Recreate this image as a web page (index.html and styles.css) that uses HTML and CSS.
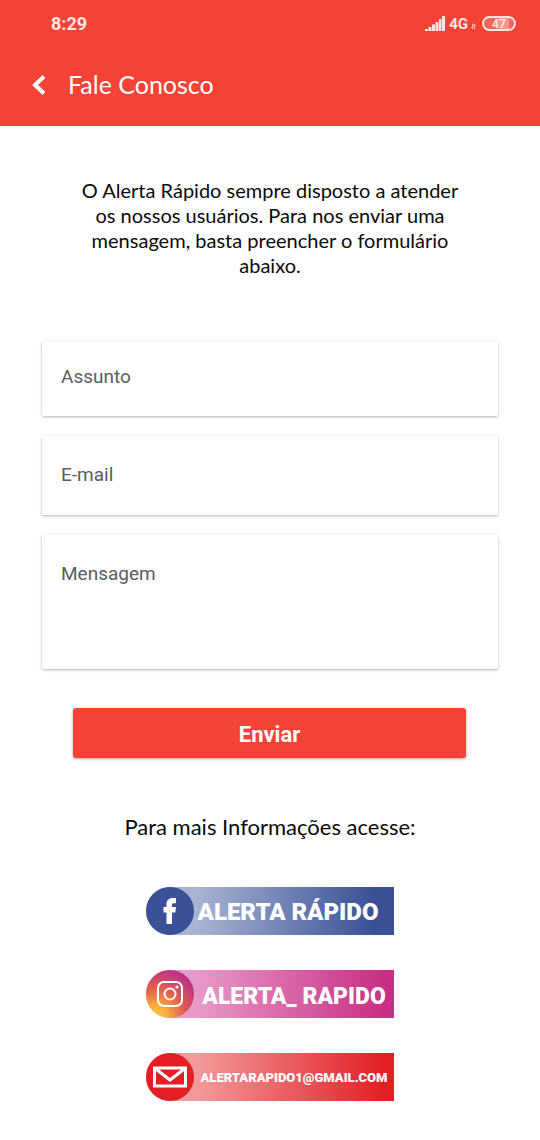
FILE: index.html
```html
<!DOCTYPE html>
<html lang="pt-BR">
<head>
<meta charset="utf-8">
<meta name="viewport" content="width=device-width, initial-scale=1">
<title>Fale Conosco</title>
<link rel="stylesheet" href="styles.css">
</head>
<body>
<header class="header">
  <div class="status">
    <span class="clock">8:29</span>
    <div class="indicators">
      <svg class="signal" viewBox="0 0 20 15" aria-hidden="true"><path d="M0 13h3v2H0zM3.500 11h3v4h-3zM7 8.500h3V15H7zM10.500 6h3v9h-3zM14 3h2.500v12H14zM17 0h3v15h-3z"/></svg>
      <span>4G</span>
      <svg class="traffic" viewBox="0 0 6 7" aria-hidden="true"><path d="M2 0v6L0 4M4 7V1l2 2"/></svg>
      <span class="battery">47</span>
    </div>
  </div>
  <div class="appbar">
    <button class="back" type="button" aria-label="Voltar">
      <svg viewBox="0 0 14 22" aria-hidden="true"><path d="M12 2.500 3 11l9 8.500"/></svg>
    </button>
    <h1 class="title">Fale Conosco</h1>
  </div>
</header>
<main class="content">
  <p class="intro">O Alerta Rápido sempre disposto a atender os nossos usuários. Para nos enviar uma mensagem, basta preencher o formulário abaixo.</p>
  <form class="form">
    <input class="field subject" type="text" placeholder="Assunto" aria-label="Assunto">
    <input class="field email" type="email" placeholder="E-mail" aria-label="E-mail">
    <textarea class="field message" placeholder="Mensagem" aria-label="Mensagem"></textarea>
    <button class="submit" type="submit">Enviar</button>
  </form>
  <h2 class="more">Para mais Informações acesse:</h2>
  <nav class="links" aria-label="Contatos">
    <a class="banner facebook" href="#facebook">
      <svg class="logo" viewBox="0 0 48 48" aria-hidden="true">
        <circle cx="24" cy="24" r="24" fill="#3b5096"/>
        <path fill="#fff" d="M20.500 37V25.500h-3V20h3v-2.500c0-4.300 2.300-6.500 6.500-6.500h3v5.200h-2c-1.500 0-2 .6-2 1.800v2h4l-.6 5.500H26V37z"/>
      </svg>
      <span class="label">ALERTA RÁPIDO</span>
    </a>
    <a class="banner instagram" href="#instagram">
      <svg class="logo" viewBox="0 0 48 48" aria-hidden="true">
        <defs><radialGradient id="insta" cx=".2" cy=".98" r="1"><stop offset="0" stop-color="#ffd13b"/><stop offset=".25" stop-color="#f8ab3c"/><stop offset=".58" stop-color="#e2604f"/><stop offset="1" stop-color="#bf3385"/></radialGradient></defs>
        <circle cx="24" cy="24" r="24" fill="url(#insta)"/>
        <g fill="none" stroke="#fff" stroke-width="2"><rect x="12" y="12" width="24" height="24" rx="6"/><circle cx="24" cy="24" r="5.500"/></g>
        <circle cx="31" cy="17" r="1.600" fill="#fff"/>
      </svg>
      <span class="label">ALERTA_ RAPIDO</span>
    </a>
    <a class="banner mail" href="mailto:alertarapido1@gmail.com">
      <svg class="logo" viewBox="0 0 48 48" aria-hidden="true">
        <circle cx="24" cy="24" r="24" fill="#e31f26"/>
        <path d="M8.500 15h31v18h-31zM8.500 15 24 27l15.500-12" fill="none" stroke="#fff" stroke-width="3"/>
      </svg>
      <span class="label">ALERTARAPIDO1@GMAIL.COM</span>
    </a>
  </nav>
</main>
</body>
</html>
```

FILE: styles.css
```css
* { box-sizing: border-box; }

body {
  margin: 0;
  background: #fff;
  color: #0a0a0a;
  font-family: Roboto, "Liberation Sans", sans-serif;
}

.header { background: #f44336; color: #fff; }

.status {
  display: flex;
  align-items: center;
  justify-content: space-between;
  height: 47px;
  padding: 0 24px 0 51px;
  color: #ffe5e1;
  font-weight: 700;
}

.clock { font-size: 18px; }

.indicators { display: flex; align-items: center; gap: 4px; font-size: 15px; }
.signal { width: 20px; height: 15px; fill: currentColor; }
.traffic {
  width: 5px;
  height: 7px;
  margin: 6px 2px 0 -1px;
  fill: none;
  stroke: currentColor;
}
.battery {
  width: 34px;
  height: 15px;
  border: 2px solid currentColor;
  border-radius: 8px;
  background: linear-gradient(90deg, #f6665b 47%, #f9958c 47%, #f9958c 84%, #f6665b 84%);
  font-size: 12px;
  line-height: 12px;
  text-align: center;
}

.appbar {
  display: flex;
  align-items: center;
  gap: 22px;
  height: 79px;
  padding: 0 32px 4px;
}

.back {
  display: flex;
  padding: 0;
  border: 0;
  background: none;
  cursor: pointer;
}
.back svg { width: 14px; height: 22px; fill: none; stroke: #fff; stroke-width: 4; }

.title {
  margin: 0;
  padding-bottom: 2px;
  font: 400 25px/32px Lato, sans-serif;
}

.content { padding: 52px 42px 38px; }

.intro {
  max-width: 400px;
  margin: 0 auto 63px;
  font: 400 20px/25px Lato, sans-serif;
  text-align: center;
}

.form { display: flex; flex-direction: column; gap: 20px; }

.field {
  width: 100%;
  padding: 0 19px;
  border: 0;
  border-radius: 2px;
  outline: 0;
  background: #fff;
  box-shadow: 0 1px 3px #0000004d;
  color: #444;
  font: 400 19px/24px Roboto, sans-serif;
}
.field::placeholder { color: #5c5c5c; opacity: 1; }
.subject { height: 75px; padding-bottom: 4px; }
.email { height: 79px; padding-bottom: 2px; }
.message { display: block; height: 134px; padding-top: 27px; resize: none; }

.submit {
  height: 50px;
  margin: 19px 32px 0 31px;
  padding: 4px 0 0;
  border: 0;
  border-radius: 3px;
  background: #f44336;
  box-shadow: 0 1px 3px #00000059;
  color: #fff;
  font: 700 22px/28px Roboto, sans-serif;
  cursor: pointer;
}

.more {
  margin: 55px 0 46px;
  font: 400 22px/28px Lato, sans-serif;
  text-align: center;
}

.links { display: flex; flex-direction: column; align-items: center; gap: 35px; }

.banner {
  display: flex;
  align-items: center;
  width: 248px;
  height: 48px;
  border-radius: 24px 0 0 24px;
  color: #fff;
  font-family: Roboto, sans-serif;
  font-weight: 900;
  text-decoration: none;
  white-space: nowrap;
}
.logo { flex: none; width: 48px; height: 48px; }
.label { flex: 1; text-align: center; }

.facebook { background: linear-gradient(90deg, #a9b4d3 20%, #3b5096 92%); font-size: 24px; }
.facebook .label { padding: 2px 12px 0 0; }
.instagram { background: linear-gradient(90deg, #e79ac7 20%, #c92f84 96%); font-size: 23px; }
.instagram .label { padding-top: 4px; }
.mail { background: linear-gradient(90deg, #f29a9b 20%, #e31f26 96%); font-size: 13px; }
```
